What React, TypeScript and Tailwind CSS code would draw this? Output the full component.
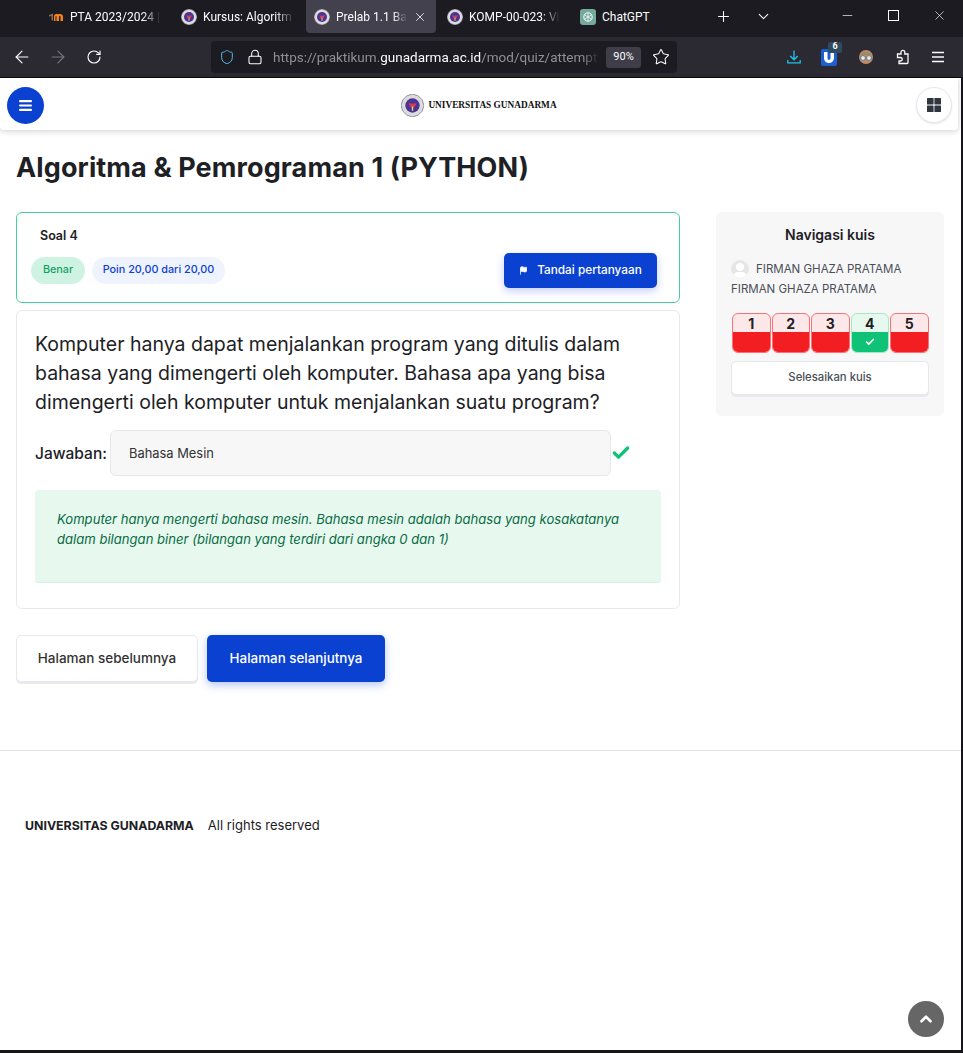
import { Check, ChevronDown, ChevronUp, Flag, Minus, Plus, RotateCw, Star, X, ArrowLeft, ArrowRight, Lock, Shield } from 'lucide-react'

const tabs = [
  { title: 'PTA 2023/2024 | T', icon: 'moodle' },
  { title: 'Kursus: Algoritm', icon: 'crest' },
  { title: 'Prelab 1.1 Bah', icon: 'crest', active: true },
  { title: 'KOMP-00-023: Vi', icon: 'crest' },
  { title: 'ChatGPT', icon: 'gpt' },
]

const questions = [
  { n: 1, ok: false },
  { n: 2, ok: false },
  { n: 3, ok: false },
  { n: 4, ok: true },
  { n: 5, ok: false },
]

function Crest({ size = 16 }: { size?: number }) {
  return (
    <svg width={size} height={size} viewBox="0 0 24 24" className="shrink-0">
      <polygon points="12,0 18,2 22,6 24,12 22,18 18,22 12,24 6,22 2,18 0,12 2,6 6,2" fill="#dedbe0" stroke="#77727c" strokeWidth="0.8" />
      <circle cx="12" cy="12" r="7.500" fill="#4a3590" />
      <path d="M8 9.500c2 1 6 1 8 0-.5 3-2 5-4 5s-3.500-2-4-5z" fill="#d43a5c" />
      <rect x="11.300" y="13" width="1.400" height="4.500" fill="#f1d76a" />
    </svg>
  )
}

function TabIcon({ kind }: { kind: string }) {
  if (kind === 'crest') return <Crest />
  if (kind === 'moodle') {
    return (
      <svg width="16" height="16" viewBox="0 0 16 16" className="shrink-0">
        <path d="M1 6l4-1.500v7H3.500V7L1 7.500z" fill="#8a6a4a" />
        <path d="M6 12V7.500C6 5.500 7.500 5 9 5s1 .5 1 .5c.5-.5 1-.5 2-.5 1.800 0 3 1 3 2.500V12h-2.500V8c0-.8-.3-1-.8-1s-.7.300-.7 1v4H8.500V8c0-.8-.3-1-.6-1s-.4.300-.4 1v4z" fill="#f58220" />
      </svg>
    )
  }
  return (
    <span className="flex h-4 w-4 shrink-0 items-center justify-center rounded-[3px] bg-[#74aa9c]">
      <svg width="12" height="12" viewBox="0 0 12 12" fill="none" stroke="#fff" strokeWidth="1">
        <circle cx="6" cy="6" r="4.200" />
        <path d="M6 1.800v8.400M2.400 3.900l7.200 4.200M2.400 8.100l7.200-4.200" strokeWidth="0.700" />
      </svg>
    </span>
  )
}

function BrowserChrome() {
  return (
    <div className="border-b border-[#0c0c0f] font-['Roboto',sans-serif]">
      {/* tab strip */}
      <div className="flex h-[37px] bg-[#1c1b22] pl-[40px] text-[12px] text-[#fbfbfe]">
        {tabs.map((t) => (
          <div
            key={t.title}
            className={`mr-[3px] flex h-[33px] w-[130px] items-center gap-[6px] rounded-b-[4px] pl-[8px] pr-[9px] ${t.active ? 'bg-[#42414d]' : ''}`}
          >
            <TabIcon kind={t.icon} />
            <span className={`min-w-0 flex-1 whitespace-nowrap ${t.icon === 'gpt' ? '' : '[mask-image:linear-gradient(to_right,black_80%,transparent)]'}`}>
              {t.title}
            </span>
            {t.active && <X size={14} strokeWidth={1.400} className="shrink-0" />}
          </div>
        ))}
        <div className="flex h-[33px] items-center">
          <Plus size={17} strokeWidth={1.500} className="ml-[10px]" />
          <ChevronDown size={17} strokeWidth={1.500} className="ml-[23px]" />
        </div>
        <div className="ml-auto flex h-[30px] items-center pr-[16px]">
          <Minus size={15} strokeWidth={1.100} />
          <span className="ml-[33px] h-[11px] w-[11px] border border-[#fbfbfe]" />
          <X size={15} strokeWidth={1.100} className="ml-[33px]" />
        </div>
      </div>
      {/* toolbar */}
      <div className="flex h-[40px] items-center bg-[#2b2a33] pl-[12px] pr-[16px] text-[#fbfbfe]">
        <ArrowLeft size={20} strokeWidth={1.400} />
        <ArrowRight size={20} strokeWidth={1.400} className="ml-[16px] text-[#77767d]" />
        <RotateCw size={16} strokeWidth={1.700} className="ml-[18px]" />
        <div className="ml-[109px] flex h-[32px] w-[466px] items-center rounded-[4px] bg-[#1c1b22] pl-[8px] pr-[6px]">
          <Shield size={16} strokeWidth={1.500} className="text-[#5ab8ea]" />
          <Lock size={16} strokeWidth={1.600} className="ml-[12px]" />
          <span className="ml-[10px] w-[326px] overflow-hidden whitespace-nowrap text-[13.500px] text-[#8f8f96] [mask-image:linear-gradient(to_right,black_95%,transparent)]">
            https://praktikum.<span className="text-[#fbfbfe]">gunadarma.ac.id</span>/mod/quiz/attempt
          </span>
          <span className="ml-[7px] flex h-[21px] w-[35px] shrink-0 items-center justify-center rounded-[3px] bg-[#3e3d48] text-[11px]">90%</span>
          <Star size={18} strokeWidth={1.400} className="ml-[11px] shrink-0" />
        </div>
        <svg width="16" height="16" viewBox="0 0 16 16" fill="none" stroke="#1fc5ee" strokeWidth="1.300" className="ml-[109px]">
          <path d="M8 1.500v9M4.200 7 8 10.800 11.800 7M1.800 11v2.800h12.400V11" />
        </svg>
        <div className="relative ml-[19px] flex h-[17px] w-[16px] items-center justify-center rounded-[2px] bg-[#1b5fd1]">
          <svg width="12" height="13" viewBox="0 0 12 13">
            <path d="M1 1h3.500v6c0 1 .7 2 1.500 2s1.500-1 1.500-2V1H11v6c0 3-2.500 5-5 5S1 10 1 7z" fill="#fff" />
          </svg>
          <span className="absolute -right-[5px] -top-[7px] flex h-[11px] w-[14px] items-center justify-center rounded-[2px] bg-[#2e4a5e] text-[9px] font-bold">6</span>
        </div>
        <svg width="16" height="16" viewBox="0 0 16 16" className="ml-[21px]">
          <circle cx="8" cy="8" r="7" fill="#c08a66" />
          <path d="M2 6c2-4 10-4 12 0z" fill="#9a8a68" />
          <circle cx="5" cy="9" r="2.400" fill="#e6eef0" stroke="#5f7f85" />
          <circle cx="11" cy="9" r="2.400" fill="#e6eef0" stroke="#5f7f85" />
        </svg>
        <svg width="16" height="16" viewBox="0 0 16 16" fill="none" stroke="#fbfbfe" strokeWidth="1.300" className="ml-[21px]">
          <path d="M2.500 5H6V3.200a1.900 1.900 0 0 1 3.800 0V5H13v8.500a1 1 0 0 1-1 1H4V12h1.500a1.700 1.700 0 0 0 0-3.500H2.500z" />
        </svg>
        <svg width="14" height="12" viewBox="0 0 14 12" stroke="#fbfbfe" strokeWidth="1.300" className="ml-[20px]">
          <path d="M1 1.500h12M1 6h12M1 10.500h12" />
        </svg>
      </div>
    </div>
  )
}

function Header() {
  return (
    <header className="flex h-[52px] w-[958px] items-center justify-between rounded-b-[4px] bg-white pl-[7px] pr-[6px] pt-[2px] shadow-[0_1px_6px_rgba(0,0,0,0.2)]">
      <button className="flex h-[37px] w-[37px] items-center justify-center rounded-full bg-[#0a41d0] text-white">
        <svg width="13" height="11" viewBox="0 0 13 11" fill="white">
          <rect width="13" height="2.200" rx="1" />
          <rect y="4.400" width="13" height="2.200" rx="1" />
          <rect y="8.800" width="13" height="2.200" rx="1" />
        </svg>
      </button>
      <div className="flex items-center gap-[4px] pr-[2px]">
        <Crest size={23} />
        <span className="pt-[2px] font-['Liberation_Serif',serif] text-[9.300px] font-bold text-[#111]">UNIVERSITAS GUNADARMA</span>
      </div>
      <button className="flex h-[36px] w-[36px] items-center justify-center rounded-full border border-[#e6e7ef] bg-white shadow-[0_1px_2px_rgba(0,0,0,0.1)]">
        <svg width="14" height="14" viewBox="0 0 14 14" fill="#2f3640">
          <rect width="6.600" height="6.600" rx="0.600" />
          <rect x="7.400" width="6.600" height="6.600" rx="0.600" />
          <rect y="7.400" width="6.600" height="6.600" rx="0.600" />
          <rect x="7.400" y="7.400" width="6.600" height="6.600" rx="0.600" />
        </svg>
      </button>
    </header>
  )
}

function QuizNav() {
  return (
    <aside className="flex h-[204px] w-[228px] flex-col rounded-[6px] bg-[#f7f7f8] px-[15px] pt-[14px]">
      <p className="text-center text-[14px] font-semibold leading-[18px] text-[#1d2125]">Navigasi kuis</p>
      <div className="pt-[15px] text-[11.500px] leading-[20px] text-[#4a4f57]">
        <div className="flex items-center gap-[7px]">
          <span className="relative h-[18px] w-[18px] overflow-hidden rounded-full bg-[#e6e6e6]">
            <span className="absolute left-[5px] top-[3px] h-[8px] w-[8px] rounded-full bg-white" />
            <span className="absolute left-[2px] top-[12px] h-[10px] w-[14px] rounded-full bg-white" />
          </span>
          FIRMAN GHAZA PRATAMA
        </div>
        <div>FIRMAN GHAZA PRATAMA</div>
      </div>
      <div className="flex gap-[1px] pl-[1px] pt-[14px]">
        {questions.map((q) => (
          <div
            key={q.n}
            className={`h-[40px] w-[38.500px] overflow-hidden rounded-[6px] border-[1.5px] ${q.ok ? 'border-[#a5e8c8] bg-[#e7f8ef]' : 'border-[#fb7178] bg-[#fde8e9]'}`}
          >
            <p className="h-[18px] text-center text-[14px] font-bold leading-[19px] text-[#1d2125]">{q.n}</p>
            <div className={`flex h-[20px] items-center justify-center ${q.ok ? 'bg-[#0fc275]' : 'bg-[#f31e21]'}`}>
              {q.ok && <Check size={10} strokeWidth={4} className="text-white" />}
            </div>
          </div>
        ))}
      </div>
      <button className="mt-[8px] h-[34px] w-[198px] rounded-[5px] border border-[#e6e7ef] bg-white pb-[1px] text-[11.300px] font-medium text-[#4a4f57] shadow-[0_2px_0_#e9eaf0]">
        Selesaikan kuis
      </button>
    </aside>
  )
}

function QuizMain() {
  return (
    <main className="w-[664px]">
      <section className="flex h-[91px] flex-col rounded-[6px] border border-[#47d19a] px-[14px] pt-[14px]">
        <p className="pl-[9px] text-[12.500px] font-semibold leading-[18px] text-[#1d2125]">Soal 4</p>
        <div className="flex items-center justify-between pr-[8px] pt-[8px]">
          <div className="flex items-center gap-[7px] text-[10.800px] font-medium">
            <span className="flex h-[27px] w-[54px] items-center justify-center rounded-full bg-[#cff3e2] text-[#14a164]">Benar</span>
            <span className="flex h-[27px] w-[133px] items-center justify-center rounded-full bg-[#eff3fd] text-[#0a41d0]">Poin 20,00 dari 20,00</span>
          </div>
          <button className="flex h-[35px] w-[153px] items-center justify-center gap-[9px] rounded-[5px] bg-[#0a41d0] text-[11.800px] font-medium text-white shadow-[0_3px_8px_rgba(10,65,208,0.25)]">
            <Flag size={9} fill="currentColor" />
            Tandai pertanyaan
          </button>
        </div>
      </section>

      <section className="mt-[7px] h-[299px] rounded-[6px] border border-[#e8e8ec] px-[18px] pt-[19px]">
        <p className="text-[19.500px] leading-[29px] text-[#1d2125]">
          Komputer hanya dapat menjalankan program yang ditulis dalam bahasa yang dimengerti oleh komputer. Bahasa apa yang bisa dimengerti oleh komputer untuk menjalankan suatu program?
        </p>
        <div className="flex items-center pt-[13px]">
          <span className="w-[75px] whitespace-nowrap pt-[1px] text-[15.500px] font-medium text-[#1d2125]">Jawaban:</span>
          <div className="flex h-[46px] w-[501px] items-center rounded-[6px] border border-[#e8e8ec] bg-[#f7f7f8] pl-[18px] pt-[2px] text-[12.900px] text-[#333]">
            Bahasa Mesin
          </div>
          <Check size={20} strokeWidth={4} className="text-[#0fc275]" />
        </div>
        <div className="mt-[14px] h-[93px] rounded-[4px] border-b border-[#d3f3e2] bg-[#e7f8ef] px-[22px] pt-[19px] text-[13.100px] italic leading-[20px] text-[#086b43]">
          Komputer hanya mengerti bahasa mesin. Bahasa mesin adalah bahasa yang kosakatanya dalam bilangan biner (bilangan yang terdiri dari angka 0 dan 1)
        </div>
      </section>

      <div className="flex gap-[9px] pt-[26px]">
        <button className="h-[47px] w-[182px] rounded-[5px] border border-[#e6e7ef] bg-white text-[13.500px] font-medium text-[#333] shadow-[0_2px_0_#e9eaf0]">
          Halaman sebelumnya
        </button>
        <button className="h-[47px] w-[178px] rounded-[5px] bg-[#0a41d0] text-[13.400px] font-medium text-white shadow-[0_3px_8px_rgba(10,65,208,0.3)]">
          Halaman selanjutnya
        </button>
      </div>
    </main>
  )
}

export default function App() {
  return (
    <div className="relative h-[1053px] w-[963px] overflow-hidden bg-[#16151a] font-['Inter',sans-serif]">
      <BrowserChrome />
      <div className="h-[972px] w-[961px] bg-white">
        <Header />
        <div className="px-[16px]">
          <h1 className="pb-[26px] pt-[20px] text-[27px] font-bold leading-[36px] tracking-[0.12px] text-[#1d2125]">Algoritma &amp; Pemrograman 1 (PYTHON)</h1>
          <div className="flex gap-[36px]">
            <QuizMain />
            <QuizNav />
          </div>
        </div>
        <footer className="mt-[68px] border-t border-[#e3e3e6] pl-[25px] pt-[65px] text-[13px] text-[#1d2125]">
          <span className="text-[12.350px] font-bold">UNIVERSITAS GUNADARMA</span>
          <span className="pl-[14px]">All rights reserved</span>
        </footer>
      </div>
      <button className="absolute left-[908px] top-[1001px] flex h-[36px] w-[36px] items-center justify-center rounded-full bg-[#666] text-white">
        <ChevronUp size={18} strokeWidth={3.500} />
      </button>
    </div>
  )
}
